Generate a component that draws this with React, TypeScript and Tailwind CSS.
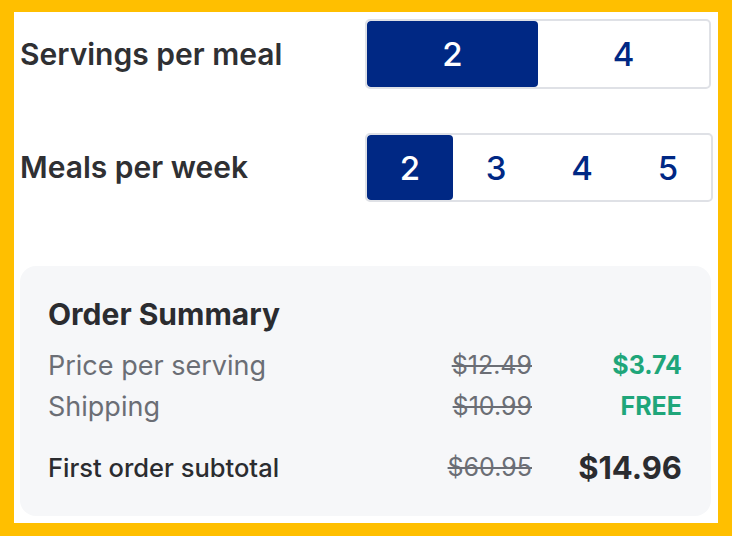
import React from "react";

function Segmented({ options, selected, width, height }: { options: string[]; selected: string; width: string; height: string }) {
  return (
    <div className={`flex border-2 border-[#dfe1e6] rounded-[5px] bg-white overflow-hidden ${width} ${height}`}>
      {options.map((o) => (
        <div
          key={o}
          className={`flex-1 flex items-center justify-center text-[33px] font-medium pt-[2px] ${
            o === selected ? "bg-[#002884] text-white rounded-[4px]" : "text-[#002884]"
          }`}
        >
          {o}
        </div>
      ))}
    </div>
  );
}

export default function App() {
  return (
    <div
      className="w-[732px] h-[536px] bg-[#FFBF00] pt-[12px] pl-[14px] pr-[14px] pb-[13px]"
      style={{ fontFamily: "Inter, 'Noto Sans', sans-serif" }}
    >
      <div className="w-full h-full bg-white pl-[6px] pr-[7px] pt-[7px]">
        <div className="flex items-center h-[70px]">
          <div className="flex-1 text-[30px] font-semibold text-[#2f3033]">Servings per meal</div>
          <Segmented options={["2", "4"]} selected="2" width="w-[346px]" height="h-[70px]" />
        </div>
        <div className="flex items-center h-[69px] mt-[44px]">
          <div className="flex-1 text-[30px] font-semibold text-[#2f3033]">Meals per week</div>
          <div className="mr-[-2px]">
            <Segmented options={["2", "3", "4", "5"]} selected="2" width="w-[348px]" height="h-[69px]" />
          </div>
        </div>
        <div className="mt-[64px] h-[250px] rounded-[16px] bg-[#f6f7f9] pl-[28px] pr-[29px] pt-[30px]">
          <div className="text-[30px] font-bold text-[#2b2c30] leading-[36px]">Order Summary</div>
          <div className="flex items-center leading-[41px] mt-[13px]">
            <div className="flex-1 text-[27px] text-[#6b6e75]">Price per serving</div>
            <div className="w-[120px] text-right text-[25px] text-[#6b6e75] line-through">$12.49</div>
            <div className="w-[150px] text-right text-[25px] text-[#1fa67a] font-bold">$3.74</div>
          </div>
          <div className="flex items-center leading-[41px]">
            <div className="flex-1 text-[27px] text-[#6b6e75]">Shipping</div>
            <div className="w-[120px] text-right text-[25px] text-[#6b6e75] line-through">$10.99</div>
            <div className="w-[150px] text-right text-[25px] text-[#1fa67a] font-bold">FREE</div>
          </div>
          <div className="flex items-center mt-[17px] h-[48px]">
            <div className="flex-1 text-[25.5px] font-medium text-[#2b2c30]">First order subtotal</div>
            <div className="w-[120px] text-right text-[25px] text-[#6b6e75] line-through">$60.95</div>
            <div className="w-[150px] text-right text-[31px] font-bold text-[#2b2c30]">$14.96</div>
          </div>
        </div>
      </div>
    </div>
  );
}
